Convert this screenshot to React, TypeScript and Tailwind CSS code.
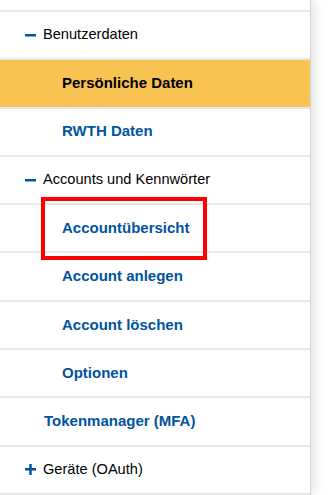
import React from 'react';

type Item = {
  label: string;
  level: 1 | 2;
  icon?: 'minus' | 'plus';
  active?: boolean;
};

const items: Item[] = [
  { label: 'Benutzerdaten', level: 1, icon: 'minus' },
  { label: 'Persönliche Daten', level: 2, active: true },
  { label: 'RWTH Daten', level: 2 },
  { label: 'Accounts und Kennwörter', level: 1, icon: 'minus' },
  { label: 'Accountübersicht', level: 2 },
  { label: 'Account anlegen', level: 2 },
  { label: 'Account löschen', level: 2 },
  { label: 'Optionen', level: 2 },
  { label: 'Tokenmanager (MFA)', level: 1 },
  { label: 'Geräte (OAuth)', level: 1, icon: 'plus' },
];

const Toggle: React.FC<{ kind: 'minus' | 'plus' }> = ({ kind }) => (
  <svg width="11" height="11" viewBox="0 0 11 11" className="mr-[7px] shrink-0">
    <rect x="0" y="4" width="11" height="2.5" fill="#00549f" />
    {kind === 'plus' && <rect x="4.25" y="0" width="2.5" height="11" fill="#00549f" />}
  </svg>
);

const NavRow: React.FC<{ item: Item }> = ({ item }) => {
  const base = 'flex items-center h-[48.3px] border-b-2 border-[#e8e8e8] text-[15px]';
  if (item.level === 2) {
    return (
      <div className={`${base} pl-[62px] font-bold ${item.active ? 'bg-[#f8c350] text-black' : 'text-[#00549f]'}`}>
        {item.label}
      </div>
    );
  }
  if (item.icon) {
    return (
      <div className={`${base} pl-[25px] text-black`}>
        <Toggle kind={item.icon} />
        <span className="text-[14.6px]">{item.label}</span>
      </div>
    );
  }
  return <div className={`${base} pl-[44px] font-bold text-[#00549f]`}>{item.label}</div>;
};

export default function App() {
  return (
    <div
      className="relative w-[331px] h-[495px] overflow-hidden bg-white"
      style={{ fontFamily: '"Liberation Sans", Arial, sans-serif' }}
    >
      <div className="w-[311px] h-full bg-white border-r border-[#d4d4d4] shadow-[3px_0_10px_rgba(0,0,0,0.12)]">
        <div className="h-[12px] border-b-2 border-[#e8e8e8]" />
        {items.map((item) => (
          <NavRow key={item.label} item={item} />
        ))}
      </div>
      {/* highlight marker */}
      <div className="absolute left-[41px] top-[197px] w-[166px] h-[63px] border-4 border-[#ff0000]" />
    </div>
  );
}
